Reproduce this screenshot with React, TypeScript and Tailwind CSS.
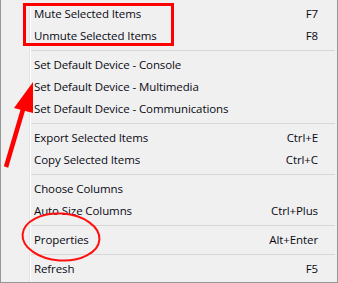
import React from "react";

type Item = { label: string; shortcut?: string } | "sep";

const items: Item[] = [
  { label: "Mute Selected Items", shortcut: "F7" },
  { label: "Unmute Selected Items", shortcut: "F8" },
  "sep",
  { label: "Set Default Device - Console" },
  { label: "Set Default Device - Multimedia" },
  { label: "Set Default Device - Communications" },
  "sep",
  { label: "Export Selected Items", shortcut: "Ctrl+E" },
  { label: "Copy Selected Items", shortcut: "Ctrl+C" },
  "sep",
  { label: "Choose Columns" },
  { label: "Auto Size Columns", shortcut: "Ctrl+Plus" },
  "sep",
  { label: "Properties", shortcut: "Alt+Enter" },
  "sep",
  { label: "Refresh", shortcut: "F5" },
];

export default function App() {
  return (
    <div className="relative w-[338px] h-[283px] overflow-hidden bg-[#f0f0f0] font-['Open_Sans',sans-serif] text-[11.5px] tracking-[-0.1px] text-[#0a0a14]">
      <div className="absolute inset-0 border-l border-r border-b border-[#979797] pointer-events-none" />
      <div className="flex h-full pt-[3px]">
        <div className="w-[30px] shrink-0 border-r border-[#e2e3e3]" />
        <div className="flex flex-col flex-1 border-l border-white">
          {items.map((it, i) =>
            it === "sep" ? (
              <div key={i} className="h-[7px] flex items-center pr-[3px]">
                <div className="h-px w-full bg-[#d7d7d7]" />
              </div>
            ) : (
              <div key={i} className="h-[22px] flex items-center pl-[3px] pr-[20px]">
                <span className="flex-1">{it.label}</span>
                {it.shortcut && <span>{it.shortcut}</span>}
              </div>
            )
          )}
        </div>
      </div>

      {/* annotations */}
      <div className="absolute left-[23px] top-[3px] w-[151px] h-[43px] border-[3px] border-[#ff0000]" />
      <svg className="absolute inset-0" width="338" height="283" viewBox="0 0 338 283">
        <ellipse cx="61" cy="237" rx="38.5" ry="23.5" fill="none" stroke="#ff1010" strokeWidth="2" transform="rotate(4 61 237)" />
        <line x1="6" y1="167" x2="24" y2="106" stroke="#ff0000" strokeWidth="4.5" />
        <polygon points="33,82 14,108 33,113" fill="#ff0000" />
      </svg>
    </div>
  );
}
